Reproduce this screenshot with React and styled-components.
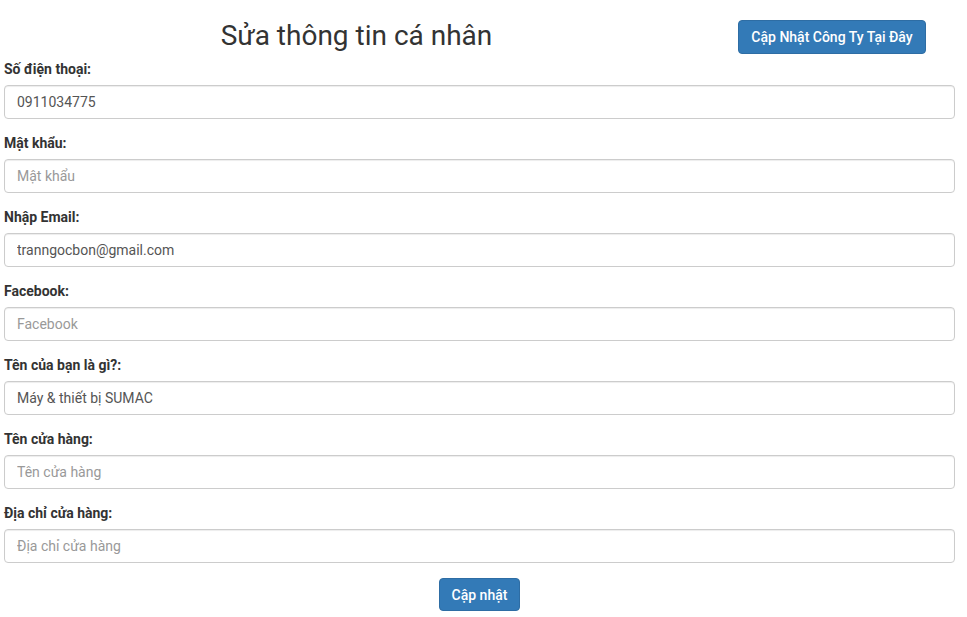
import React, { useState } from 'react';
import styled, { createGlobalStyle } from 'styled-components';

const GlobalStyle = createGlobalStyle`
    body {
        margin: 0;
        background: #fff;
        font-family: Roboto, "Liberation Sans", sans-serif;
        font-size: 14px;
        color: #333;
    }
    * { box-sizing: border-box; }
`

const Page = styled.div`
    width: 951px;
    margin-left: 4px;
    padding-top: 18px;
`

const Header = styled.div`
    display: grid;
    grid-template-columns: 705px 1fr;
    align-items: center;
    margin-bottom: 5px;
`

const Title = styled.h2`
    margin: 0;
    text-align: center;
    font-size: 28px;
    font-weight: 400;
    line-height: 36px;
    color: #333;
`

const ButtonCell = styled.div`
    display: flex;
    justify-content: center;
    padding-top: 2px;
`

const Button = styled.button`
    font-family: Roboto, "Liberation Sans", sans-serif;
    font-size: 14px;
    font-weight: 500;
    color: #fff;
    background: #337ab7;
    border: 1px solid #2e6da4;
    border-radius: 4px;
    height: ${props => props.height || '34px'};
    padding: 0 ${props => props.pad || '12px'};
    cursor: pointer;
`

const Group = styled.div`
    margin-bottom: 14px;
`

const Label = styled.label`
    display: block;
    font-weight: 700;
    line-height: 20px;
    margin-bottom: 6px;
    color: #333;
`

const Input = styled.input`
    display: block;
    width: 100%;
    height: 34px;
    padding: 6px 12px;
    font-family: Roboto, "Liberation Sans", sans-serif;
    font-size: 14px;
    color: #555;
    border: 1px solid #ccc;
    border-radius: 4px;
    box-shadow: inset 0 1px 1px rgba(0, 0, 0, .075);
    &::placeholder { color: #999; }
`

const Footer = styled.div`
    display: flex;
    justify-content: center;
    padding-top: 1px;
`

const fields = [
    { name: 'phone', label: 'Số điện thoại:', value: '0911034775', placeholder: 'Số điện thoại' },
    { name: 'password', label: 'Mật khẩu:', value: '', placeholder: 'Mật khẩu', type: 'password' },
    { name: 'email', label: 'Nhập Email:', value: 'tranngocbon@gmail.com', placeholder: 'Email' },
    { name: 'facebook', label: 'Facebook:', value: '', placeholder: 'Facebook' },
    { name: 'name', label: 'Tên của bạn là gì?:', value: 'Máy & thiết bị SUMAC', placeholder: 'Tên của bạn' },
    { name: 'shop', label: 'Tên cửa hàng:', value: '', placeholder: 'Tên cửa hàng' },
    { name: 'address', label: 'Địa chỉ cửa hàng:', value: '', placeholder: 'Địa chỉ cửa hàng' },
]

const App = () => {
    const [values, setValues] = useState(
        fields.reduce((acc, f) => ({ ...acc, [f.name]: f.value }), {})
    )

    const handleChange = e => {
        setValues({ ...values, [e.target.name]: e.target.value })
    }

    return (
        <Page>
            <GlobalStyle />
            <Header>
                <Title>Sửa thông tin cá nhân</Title>
                <ButtonCell>
                    <Button type='button'>Cập Nhật Công Ty Tại Đây</Button>
                </ButtonCell>
            </Header>
            <form onSubmit={e => e.preventDefault()}>
                {fields.map(f => (
                    <Group key={f.name}>
                        <Label htmlFor={f.name}>{f.label}</Label>
                        <Input
                            id={f.name}
                            name={f.name}
                            type={f.type || 'text'}
                            placeholder={f.placeholder}
                            value={values[f.name]}
                            onChange={handleChange}
                        />
                    </Group>
                ))}
                <Footer>
                    <Button type='submit' height='33px'>Cập nhật</Button>
                </Footer>
            </form>
        </Page>
    )
}

export default App;
